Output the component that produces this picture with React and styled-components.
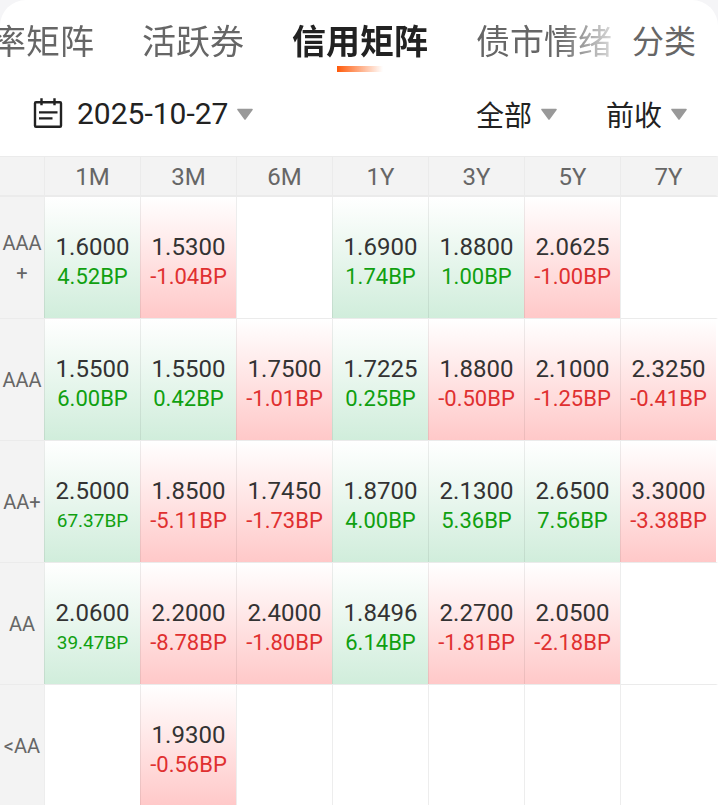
import React from "react";
import styled, { createGlobalStyle } from "styled-components";

const GlobalStyle = createGlobalStyle`
  * { box-sizing: border-box; }
  body {
    margin: 0;
    background: #f5f5f7;
    color: #222;
    font-family: Roboto, "Noto Sans CJK SC", sans-serif;
  }
  button { font: inherit; color: inherit; background: none; border: 0; padding: 0; cursor: pointer; }
`;

const Sheet = styled.main`
  min-height: 100vh;
  background: #fff;
  border-radius: 26px 26px 0 0;
  overflow: hidden;
`;

const TopBar = styled.header`
  display: flex;
  height: 76px;
  font-family: "Noto Sans CJK SC", sans-serif;
`;

const Tabs = styled.nav`
  flex: 1;
  min-width: 0;
  display: flex;
  justify-content: flex-end;
  gap: 48px;
  overflow: hidden;
  mask-image: linear-gradient(to left, rgba(0, 0, 0, 0.25), #000 56px);
`;

const Tab = styled.button`
  flex: none;
  display: flex;
  flex-direction: column;
  align-items: center;
  padding-top: 13px;
  font-size: 34px;
  line-height: 53px;
  white-space: nowrap;
  color: ${(p) => (p.$active ? "#222" : "#666")};
  font-weight: ${(p) => (p.$active ? 700 : 400)};

  &::after {
    content: "";
    width: 46px;
    height: 6px;
    background: ${(p) => (p.$active ? "linear-gradient(to right, #ff5a0a, #ff5a0a00)" : "none")};
  }
`;

const Category = styled.button`
  padding: 13px 22px 0 20px;
  font-size: 32px;
  line-height: 53px;
  display: flex;
  white-space: nowrap;
  && { color: #666; }
`;

const Filters = styled.div`
  display: flex;
  align-items: center;
  justify-content: space-between;
  height: 80px;
  padding: 0 30px 4px 32px;
`;

const FilterGroup = styled.div`
  display: flex;
  gap: 48px;
  font-family: "Noto Sans CJK SC", sans-serif;
`;

const Picker = styled.button`
  display: flex;
  align-items: center;
  gap: 8px;
  font-size: ${(p) => (p.$date ? 30 : 28)}px;
  line-height: 40px;
  white-space: nowrap;
`;

const CalendarSvg = styled.svg`
  width: 32px;
  height: 32px;
  margin-right: 5px;
`;

const ArrowSvg = styled.svg`
  width: 18px;
  height: 13px;
`;

const Matrix = styled.table`
  width: 100%;
  table-layout: fixed;
  border-collapse: separate;
  border-spacing: 0;
`;

const LabelCol = styled.col`
  width: 44px;
`;

const EdgeCol = styled.col`
  width: 2px;
`;

const HeadCell = styled.th`
  height: 41px;
  padding: 1px 0 0;
  background: #f3f3f3;
  border: solid #ebebeb;
  border-width: 1px 0 2px 1px;
  color: #666;
  font-size: 24px;
  line-height: 28px;
  font-weight: 400;
  &:first-child { border-left: 0; }
  &:last-child { border-right: 2px solid #f3f3f3; }
`;

const RowLabel = styled.th`
  height: 122px;
  padding: 0;
  background: #f3f3f3;
  border-bottom: 1px solid #ebebeb;
  color: #666;
  font-size: 20px;
  line-height: 30px;
  font-weight: 400;
  overflow-wrap: anywhere;
`;

const tints = {
  up: "linear-gradient(#fff, #d0eddb)",
  down: "linear-gradient(#fff, #ffc8c8)",
  none: "none",
};

const Cell = styled.td`
  padding: 8px 0 0;
  text-align: center;
  background: ${(p) => tints[p.$tone]} border-box;
  border-left: 1px solid rgba(0, 0, 0, 0.07);
  border-bottom: 1px solid #ebebeb;
  &:last-child {
    border-right: 2px solid #fff;
  }
`;

const Rate = styled.div`
  font-size: 24px;
  line-height: 30px;
  color: #333;
`;

const Change = styled.div`
  font-size: ${(p) => (p.$long ? 19 : 22)}px;
  line-height: 30px;
  color: ${(p) => (p.$tone === "up" ? "#10a010" : "#e03030")};
`;

const terms = ["1M", "3M", "6M", "1Y", "3Y", "5Y", "7Y"];

const rows = [
  ["AAA+", [["1.6000", "4.52"], ["1.5300", "-1.04"], null, ["1.6900", "1.74"], ["1.8800", "1.00"], ["2.0625", "-1.00"], null]],
  ["AAA", [["1.5500", "6.00"], ["1.5500", "0.42"], ["1.7500", "-1.01"], ["1.7225", "0.25"], ["1.8800", "-0.50"], ["2.1000", "-1.25"], ["2.3250", "-0.41"]]],
  ["AA+", [["2.5000", "67.37"], ["1.8500", "-5.11"], ["1.7450", "-1.73"], ["1.8700", "4.00"], ["2.1300", "5.36"], ["2.6500", "7.56"], ["3.3000", "-3.38"]]],
  ["AA", [["2.0600", "39.47"], ["2.2000", "-8.78"], ["2.4000", "-1.80"], ["1.8496", "6.14"], ["2.2700", "-1.81"], ["2.0500", "-2.18"], null]],
  ["<AA", [null, ["1.9300", "-0.56"], null, null, null, null, null]],
];

const tabs = ["率矩阵", "活跃券", "信用矩阵", "债市情绪"];

const toneOf = (value) => (!value ? "none" : value[1].startsWith("-") ? "down" : "up");

function Arrow() {
  return (
    <ArrowSvg viewBox="0 0 18 13" aria-hidden="true">
      <path d="M2 1.5h14L9 11z" fill="#999" stroke="#999" strokeWidth="1.6" strokeLinejoin="round" />
    </ArrowSvg>
  );
}

function Calendar() {
  return (
    <CalendarSvg viewBox="0 0 32 32" fill="none" stroke="#222" strokeWidth="2.4" aria-hidden="true">
      <rect x="3" y="4.2" width="26" height="24.6" rx="1" />
      <path d="M9.5 0.2v7M22.5 0.2v7M7 14.4h18.5M7 20.4h13.5" />
    </CalendarSvg>
  );
}

function MatrixCell({ value, span }) {
  const tone = toneOf(value);
  return (
    <Cell $tone={tone} colSpan={span}>
      {value && (
        <>
          <Rate>{value[0]}</Rate>
          <Change $tone={tone} $long={value[1].length > 4 && tone === "up"}>{value[1]}BP</Change>
        </>
      )}
    </Cell>
  );
}

export default function App() {
  const last = terms.length - 1;
  return (
    <>
      <GlobalStyle />
      <Sheet>
        <TopBar>
          <Tabs>
            {tabs.map((name) => (
              <Tab key={name} $active={name === "信用矩阵"}>{name}</Tab>
            ))}
          </Tabs>
          <Category>分类</Category>
        </TopBar>
        <Filters>
          <Picker $date>
            <Calendar />
            2025-10-27
            <Arrow />
          </Picker>
          <FilterGroup>
            <Picker>全部<Arrow /></Picker>
            <Picker>前收<Arrow /></Picker>
          </FilterGroup>
        </Filters>
        <Matrix>
          <colgroup>
            <LabelCol />
            {terms.map((t) => <col key={t} />)}
            <EdgeCol />
          </colgroup>
          <thead>
            <tr>
              <HeadCell as="td" />
              {terms.map((t, i) => (
                <HeadCell key={t} scope="col" colSpan={i === last ? 2 : 1}>{t}</HeadCell>
              ))}
            </tr>
          </thead>
          <tbody>
            {rows.map(([label, values]) => (
              <tr key={label}>
                <RowLabel scope="row">{label}</RowLabel>
                {values.map((value, i) => (
                  <MatrixCell key={terms[i]} value={value} span={i === last ? 2 : 1} />
                ))}
              </tr>
            ))}
          </tbody>
        </Matrix>
      </Sheet>
    </>
  );
}
